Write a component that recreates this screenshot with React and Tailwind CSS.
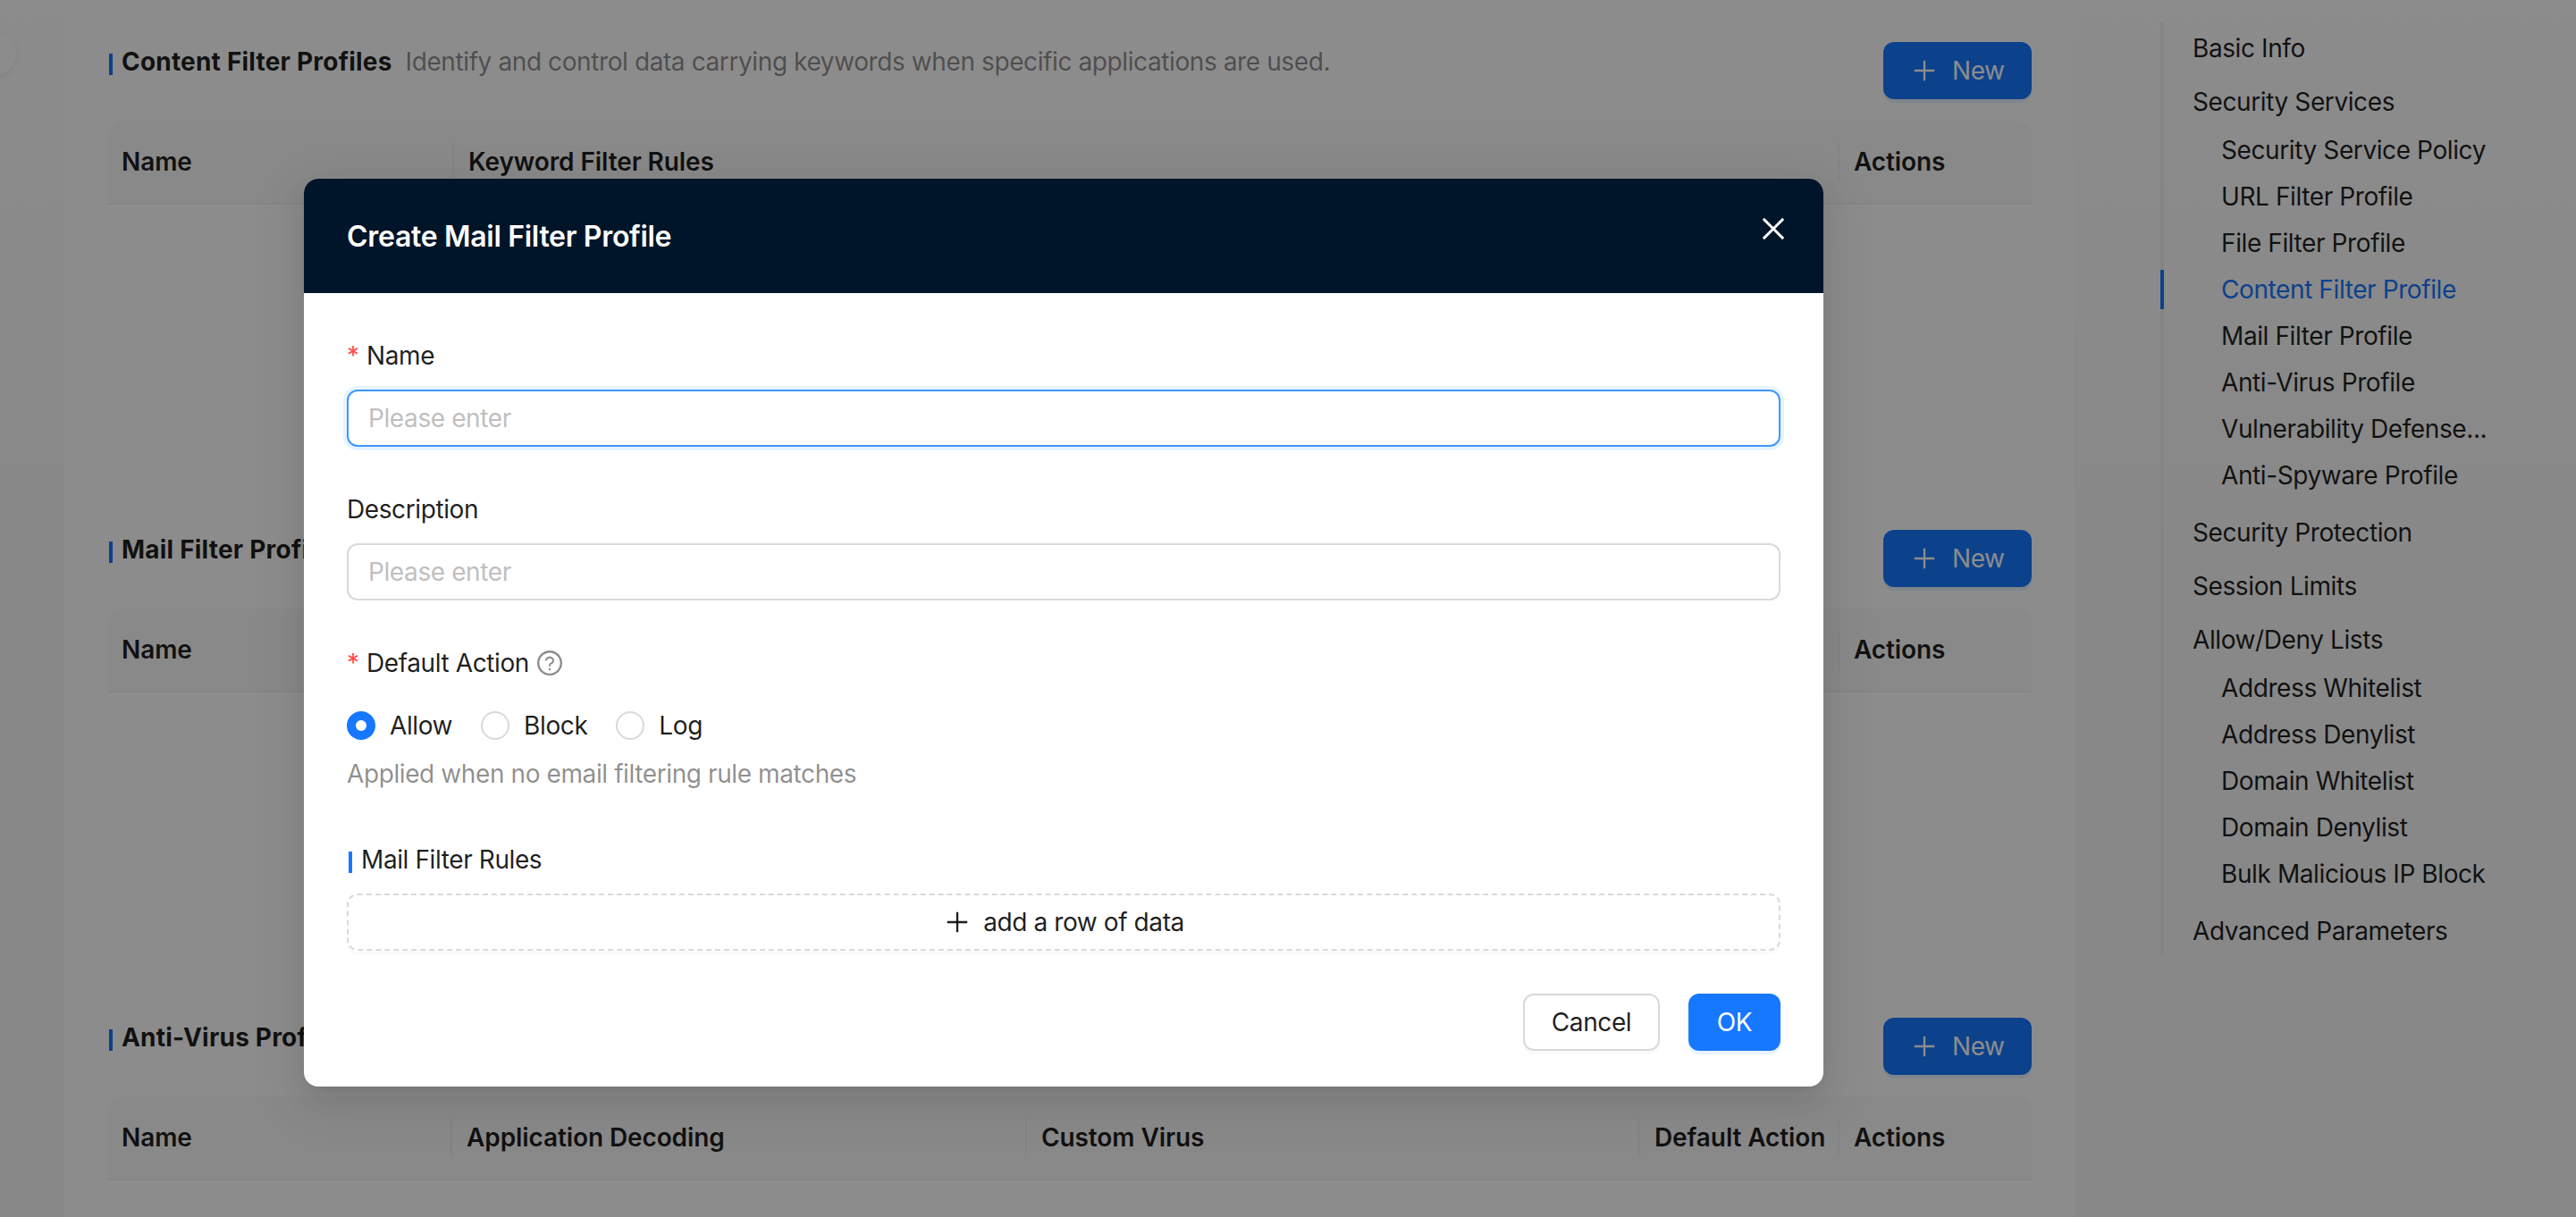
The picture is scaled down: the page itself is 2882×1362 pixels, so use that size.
import { AiOutlineClose, AiOutlinePlus, AiOutlineQuestionCircle } from 'react-icons/ai';
import clsx from 'clsx';

const anchors = [
  { title: 'Basic Info' },
  {
    title: 'Security Services',
    children: [
      'Security Service Policy',
      'URL Filter Profile',
      'File Filter Profile',
      'Content Filter Profile',
      'Mail Filter Profile',
      'Anti-Virus Profile',
      'Vulnerability Defense...',
      'Anti-Spyware Profile',
    ],
  },
  { title: 'Security Protection' },
  { title: 'Session Limits' },
  {
    title: 'Allow/Deny Lists',
    children: [
      'Address Whitelist',
      'Address Denylist',
      'Domain Whitelist',
      'Domain Denylist',
      'Bulk Malicious IP Block',
    ],
  },
  { title: 'Advanced Parameters' },
];

const sections = [
  {
    title: 'Content Filter Profiles',
    desc: 'Identify and control data carrying keywords when specific applications are used.',
    columns: [
      { label: 'Name', width: 388 },
      { label: 'Keyword Filter Rules', width: 1550 },
      { label: 'Actions', width: 215 },
    ],
  },
  {
    title: 'Mail Filter Profiles',
    columns: [
      { label: 'Name', width: 387 },
      { label: '', width: 1327 },
      { label: 'Default Action', width: 224 },
      { label: 'Actions', width: 215 },
    ],
  },
  {
    title: 'Anti-Virus Profiles',
    columns: [
      { label: 'Name', width: 386 },
      { label: 'Application Decoding', width: 643 },
      { label: 'Custom Virus', width: 686 },
      { label: 'Default Action', width: 223 },
      { label: 'Actions', width: 215 },
    ],
  },
];

const ProfileSection = ({ section }) => (
  <section className="h-[546px]">
    <div className="flex justify-between items-start h-[88px]">
      <div className="flex pl-0.5">
        <span className="w-1 h-6 mt-[13px] mr-2.5 bg-[#1677ff]" />
        <h3 className="font-bold leading-[44px] tracking-[0.2px]">{section.title}</h3>
        {section.desc && (
          <span className="ml-[15px] leading-[44px] text-black/45">{section.desc}</span>
        )}
      </div>
      <button className="flex items-center h-16 w-[166px] pl-[30px] gap-[15px] rounded-xl bg-[#1677ff] text-white shadow-[0_4px_0_rgba(5,145,255,0.1)]">
        <AiOutlinePlus className="w-8 h-8" />
        <span>New</span>
      </button>
    </div>
    <div className="flex items-center h-[94px] rounded-t-2xl bg-[#fafafa] border-b-2 border-[#f0f0f0]">
      {section.columns.map((column, i) => (
        <div
          key={column.label}
          style={{ width: column.width }}
          className={clsx(
            'flex items-center h-11 pl-4 font-semibold tracking-[-0.1px] whitespace-nowrap',
            i < section.columns.length - 1 && 'border-r-2 border-[#f0f0f0]'
          )}
        >
          {column.label}
        </div>
      ))}
    </div>
  </section>
);

const AnchorNav = () => (
  <nav className="shrink-0 w-[465px] h-[1048px] mt-6 ml-24 border-l-4 border-[#f0f0f0]">
    {anchors.map((anchor) => (
      <div key={anchor.title} className="py-2">
        <div className="pl-8 leading-[44px]">{anchor.title}</div>
        {anchor.children && (
          <div className="pt-1.5">
            {anchor.children.map((child) => {
              const active = child === 'Content Filter Profile';
              return (
                <div key={child} className="py-1">
                  <div
                    className={clsx(
                      'leading-[44px] -ml-1 border-l-4 pl-16',
                      active ? 'border-[#1677ff] text-[#1677ff]' : 'border-transparent'
                    )}
                  >
                    {child}
                  </div>
                </div>
              );
            })}
          </div>
        )}
      </div>
    ))}
  </nav>
);

const Label = ({ required, children }) => (
  <div className="flex items-center h-11">
    {required && <span className="w-[22px] text-[#ff4d4f]">*</span>}
    {children}
  </div>
);

const Radio = ({ label, checked }) => (
  <label className="flex items-center gap-4">
    <span
      className={clsx(
        'flex items-center justify-center w-8 h-8 rounded-full',
        checked ? 'bg-[#1677ff]' : 'border-2 border-[#d9d9d9]'
      )}
    >
      {checked && <span className="w-3 h-3 rounded-full bg-white" />}
    </span>
    {label}
  </label>
);

const CreateProfileModal = () => (
  <div className="absolute left-[340px] top-[200px] w-[1700px] h-[1016px] rounded-2xl bg-white shadow-[0_12px_32px_0_rgba(0,0,0,0.08),0_6px_12px_-8px_rgba(0,0,0,0.12),0_18px_56px_16px_rgba(0,0,0,0.05)]">
    <header className="flex justify-between h-32 pl-12 pr-[38px] rounded-t-2xl bg-[#001529] text-white">
      <h2 className="pt-px text-[32px] font-semibold leading-[128px] tracking-[-0.3px]">
        Create Mail Filter Profile
      </h2>
      <AiOutlineClose className="w-9 h-9 mt-[38px]" />
    </header>
    <form className="px-12 pt-12">
      <Label required>Name</Label>
      <input
        placeholder="Please enter"
        className="block w-full h-16 mt-4 px-[22px] rounded-xl border-2 border-[#4096ff] outline-none placeholder:text-[#bfbfbf] shadow-[0_0_0_4px_rgba(5,145,255,0.1)]"
      />
      <div className="mt-12">
        <Label>Description</Label>
      </div>
      <input
        placeholder="Please enter"
        className="block w-full h-16 mt-4 px-[22px] rounded-xl border-2 border-[#d9d9d9] outline-none placeholder:text-[#bfbfbf]"
      />
      <div className="mt-12">
        <Label required>
          Default Action
          <AiOutlineQuestionCircle className="w-8 h-8 ml-[7px] text-black/45" />
        </Label>
      </div>
      <div className="flex items-center h-16 mt-4 gap-8">
        <Radio label="Allow" checked />
        <Radio label="Block" />
        <Radio label="Log" />
      </div>
      <p className="leading-[44px] text-black/45">Applied when no email filtering rule matches</p>
      <div className="flex mt-[52px] h-11 pl-0.5">
        <span className="w-1 h-6 mt-[13px] mr-2.5 bg-[#1677ff]" />
        <span className="leading-[44px]">Mail Filter Rules</span>
      </div>
      <button
        type="button"
        className="flex items-center justify-center w-full h-16 mt-4 gap-[13px] rounded-xl border-2 border-dashed border-[#d9d9d9] shadow-[0_4px_0_rgba(0,0,0,0.02)]"
      >
        <AiOutlinePlus className="w-8 h-8" />
        add a row of data
      </button>
      <footer className="flex justify-end gap-8 mt-12">
        <button type="button" className="w-[153px] h-16 rounded-xl border-2 border-[#d9d9d9] shadow-[0_4px_0_rgba(0,0,0,0.02)]">
          Cancel
        </button>
        <button type="button" className="w-[103px] h-16 rounded-xl bg-[#1677ff] text-white shadow-[0_4px_0_rgba(5,145,255,0.1)]">
          OK
        </button>
      </footer>
    </form>
  </div>
);

export default function App() {
  return (
    <div className="relative w-[2882px] h-[1362px] overflow-hidden bg-[linear-gradient(#ffffff,#f7f7f7_50%)] font-[Inter,sans-serif] text-[28px] tracking-[-0.4px] text-black/88">
      <div className="flex">
        <main className="shrink-0 w-[2249px] h-[1362px] ml-[72px] pl-12 pr-12 pt-[47px] bg-white overflow-hidden">
          {sections.map((section) => (
            <ProfileSection key={section.title} section={section} />
          ))}
        </main>
        <AnchorNav />
      </div>
      <div className="absolute -left-[30px] top-9 w-12 h-12 rounded-full bg-white shadow-[0_2px_8px_rgba(0,0,0,0.08)]" />
      <div className="absolute inset-0 bg-black/45" />
      <CreateProfileModal />
    </div>
  );
}
